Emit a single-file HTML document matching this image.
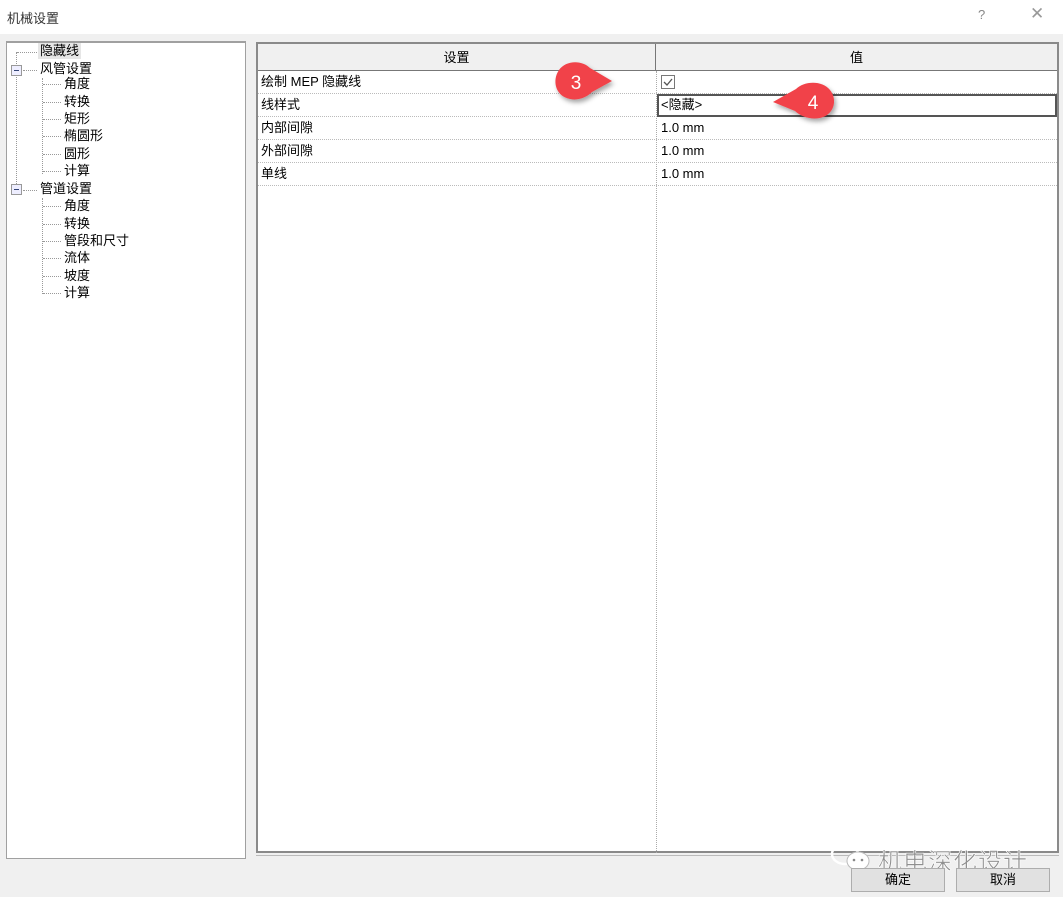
<!DOCTYPE html>
<html><head><meta charset="utf-8">
<style>
*{margin:0;padding:0;box-sizing:border-box}
body{width:1063px;height:897px;background:#f0f0f0;font-family:"Liberation Sans","Noto Sans CJK SC",sans-serif;font-size:13px;color:#000;position:relative;overflow:hidden}
.abs{position:absolute}
#title{left:0;top:0;width:1063px;height:34px;background:#fff}
#title span{position:absolute;left:7px;top:8px;font-size:13px;color:#333}
#left{left:6px;top:41px;width:240px;height:818px;background:#fff;border:1px solid #a0a0a0;border-top:2px solid #a0a0a0}
.ti{position:absolute;font-size:13px;line-height:16px;white-space:nowrap}
.hl{position:absolute;border-top:1px dotted #999;height:0}
.vl{position:absolute;border-left:1px dotted #999;width:0}
.box{position:absolute;width:11px;height:11px;border:1px solid #999;background:#eef;}
.box:after{content:"";position:absolute;left:2px;top:4px;width:5px;height:1px;background:#347}
#tbl{left:256px;top:42px;width:803px;height:811px;background:#fff;border:2px solid #8a8a8a}
.hdr{position:absolute;top:0;height:27px;background:#f0f0f0;border-bottom:1px solid #777;text-align:center;line-height:27px;font-size:13px}
.row{position:absolute;left:0;width:799px;height:23px;border-bottom:1px dotted #bbb}
.row span{position:absolute;top:0;line-height:22px;font-size:13px}
.btn{position:absolute;top:868px;width:94px;height:24px;background:#e1e1e1;border:1px solid #adadad;text-align:center;line-height:22px;font-size:13px}
</style></head><body>
<div id="title" class="abs"><span>机械设置</span>
<span style="left:978px;top:7px;color:#888">?</span>
<span style="left:1030px;top:4px;font-size:17px;color:#999">✕</span></div>

<div id="left" class="abs">
<div class="vl" style="left:9px;top:9px;height:138px"></div>
<div class="hl" style="left:10px;top:9px;width:20px"></div>
<div class="ti" style="left:31px;top:0px;background:#e6e6e6;padding:0 2px">隐藏线</div>
<div class="box" style="left:4px;top:22px"></div>
<div class="hl" style="left:16px;top:27px;width:14px"></div>
<div class="ti" style="left:33px;top:18px">风管设置</div>
<div class="vl" style="left:35px;top:35px;height:96px"></div>
<div class="box" style="left:4px;top:141px"></div>
<div class="hl" style="left:16px;top:147px;width:14px"></div>
<div class="ti" style="left:33px;top:138px">管道设置</div>
<div class="vl" style="left:35px;top:155px;height:96px"></div>
</div>
<div id="items"></div>
<script>
var a=["角度","转换","矩形","椭圆形","圆形","计算"],b=["角度","转换","管段和尺寸","流体","坡度","计算"];
var h="";
a.forEach(function(t,i){var y=42+19+17.3*(i+1)-2;h+='<div class="hl" style="left:43px;top:'+(y+8)+'px;width:18px"></div><div class="ti" style="left:64px;top:'+y+'px">'+t+'</div>';});
b.forEach(function(t,i){var y=42+138+17.3*(i+1)+1;h+='<div class="hl" style="left:43px;top:'+(y+8)+'px;width:18px"></div><div class="ti" style="left:64px;top:'+y+'px">'+t+'</div>';});
document.getElementById("items").innerHTML=h;
</script>

<div id="tbl" class="abs">
<div class="hdr" style="left:0;width:398px;border-right:1px solid #777">设置</div>
<div class="hdr" style="left:398px;width:401px">值</div>
<div class="abs" style="left:398px;top:27px;width:0;height:782px;border-left:1px dotted #aaa"></div>
<div class="row" style="top:27px"><span style="left:3px">绘制 MEP 隐藏线</span>
<span style="left:403px;top:4px;width:14px;height:14px;border:1px solid #777"><svg width="12" height="12" style="position:absolute;left:0;top:0"><path d="M2 6l3 3 5-6" stroke="#555" stroke-width="1.3" fill="none"/></svg></span></div>
<div class="row" style="top:50px"><span style="left:3px">线样式</span>
<div class="abs" style="left:399px;top:0;width:400px;height:23px;border:2px solid #555"></div><span style="left:403px">&lt;隐藏&gt;</span></div>
<div class="row" style="top:73px"><span style="left:3px">内部间隙</span><span style="left:403px">1.0 mm</span></div>
<div class="row" style="top:96px"><span style="left:3px">外部间隙</span><span style="left:403px">1.0 mm</span></div>
<div class="row" style="top:119px"><span style="left:3px">单线</span><span style="left:403px">1.0 mm</span></div>
</div>
<div class="abs" style="left:256px;top:855px;width:803px;border-top:1px solid #bbb"></div>

<svg class="abs" style="left:0;top:0" width="1063" height="200"><defs><filter id="s" x="-30%" y="-30%" width="160%" height="170%"><feDropShadow dx="2" dy="3" stdDeviation="2.5" flood-opacity=".35"/></filter></defs>
<path d="M590 68 C582 60 566 60 559 70 C552 80 555 96 570 99 C580 101 588 96 592 92 L612 81 Z" fill="#f1434a" filter="url(#s)"/>
<text x="576" y="89" font-size="19" fill="#fff" text-anchor="middle" font-family="Liberation Sans">3</text>
<path d="M796 89 C804 81 822 80 830 90 C838 100 834 115 820 118 C810 120 800 116 795 111 L773 102 Z" fill="#f1434a" filter="url(#s)"/>
<text x="813" y="109" font-size="19" fill="#fff" text-anchor="middle" font-family="Liberation Sans">4</text></svg>

<svg class="abs" style="left:828px;top:840px" width="50" height="36"><ellipse cx="17" cy="14" rx="13" ry="10" fill="none" stroke="#fff" stroke-width="2.5"/><ellipse cx="30" cy="21" rx="11" ry="9" fill="#fff" stroke="#bbb"/><circle cx="26" cy="20" r="1.3" fill="#888"/><circle cx="34" cy="20" r="1.3" fill="#888"/></svg>
<div class="abs" style="left:878px;top:842px;font-size:24px;color:#8f8f8f;-webkit-text-stroke:0.6px #fff;letter-spacing:1px">机电深化设计</div>

<div class="btn" style="left:851px">确定</div>
<div class="btn" style="left:956px">取消</div>
</body></html>
